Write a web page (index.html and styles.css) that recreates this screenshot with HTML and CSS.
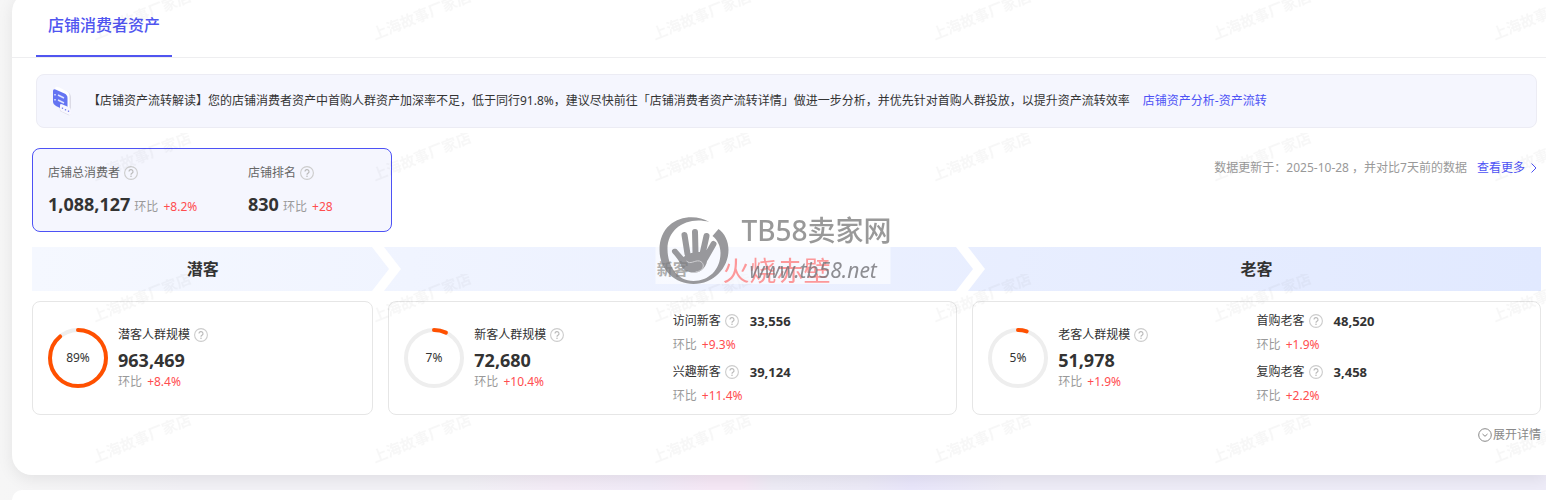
FILE: index.html
```
<!DOCTYPE html>
<html lang="zh-CN">
<head>
    <meta charset="UTF-8">
    <meta name="viewport" content="width=device-width, initial-scale=1.0">
    <title>店铺消费者资产</title>
    <link rel="stylesheet" href="styles.css">
</head>
<body>
    <svg class="defs" width="0" height="0" aria-hidden="true">
        <symbol id="help" viewBox="0 0 14 14">
            <circle cx="7" cy="7" r="6.4" fill="none" stroke="#ccc" stroke-width="1.1"/>
            <path d="M5 5.6a2 2 0 1 1 3 1.7c-.7.4-1 .7-1 1.4" fill="none" stroke="#bbb" stroke-width="1.2"/>
            <circle cx="7" cy="10.3" r=".8" fill="#bbb"/>
        </symbol>
    </svg>

    <main class="panel">
        <svg class="watermark" aria-hidden="true">
            <defs>
                <pattern id="shop-mark" width="280" height="141" patternUnits="userSpaceOnUse">
                    <text x="83" y="48" transform="rotate(-22 83 48)">上海故事厂家店</text>
                </pattern>
            </defs>
            <rect width="100%" height="100%" fill="url(#shop-mark)"/>
        </svg>

        <nav class="tabs">
            <button class="tab">店铺消费者资产</button>
        </nav>

        <div class="notice">
            <svg class="notice-icon" viewBox="0 0 20 32" aria-hidden="true">
                <path d="M5 2 15 6.500q4 2 4 6V28q0 3-3 2L8 26z" fill="#dcdbe6"/>
                <path d="M3 3Q4 1 7 2.200L14.500 6q3 1.500 3 5V27L4 18z" fill="#fff"/>
                <path d="M1 6q0-2.500 2.500-1.500l9 4q3 1.500 3 4.500v13.500L4 21q-3-1.500-3-4z" fill="#6474f2"/>
                <path d="M3 9v1.500M3 14v1.500M6 10l6 3M6 15l6 3" fill="none" stroke="#dfe4ff" stroke-width="1.500"/>
                <path d="M8 20.500q0-2 2-1.200l7 3q2 1 2 3V29q0 1.500-2 .8l-7-3.300q-2-1-2-2.500z" fill="#f8f7ff"/>
                <path d="M10.500 22.500v1.500M13.500 24v1.500M16.500 25.500V27" stroke="#7d86ee" stroke-width="1.300"/>
            </svg>
            <p class="notice-text">【店铺资产流转解读】您的店铺消费者资产中首购人群资产加深率不足，低于同行91.8%，建议尽快前往「店铺消费者资产流转详情」做进一步分析，并优先针对首购人群投放，以提升资产流转效率</p>
            <a class="link" href="#">店铺资产分析-资产流转</a>
        </div>

        <section class="content">
            <div class="overview">
                <div class="summary">
                    <div>
                        <div class="label muted">店铺总消费者<svg class="help"><use href="#help"/></svg></div>
                        <div class="summary-value"><strong class="number">1,088,127</strong><span class="ratio">环比 <em>+8.2%</em></span></div>
                    </div>
                    <div>
                        <div class="label muted">店铺排名<svg class="help"><use href="#help"/></svg></div>
                        <div class="summary-value"><strong class="number">830</strong><span class="ratio">环比 <em>+28</em></span></div>
                    </div>
                </div>
                <div class="update">
                    <span>数据更新于：2025-10-28 ，并对比7天前的数据</span>
                    <a class="link" href="#">查看更多<svg class="arrow" viewBox="0 0 6 12" aria-hidden="true"><path d="M.5 1.500 5 6 .5 10.500"/></svg></a>
                </div>
            </div>

            <div class="stages columns">
                <h2 class="stage">潜客<svg class="chevron" viewBox="0 0 29 44"><path d="M0 0h12l17 22-17 22H0l17-22z"/></svg></h2>
                <h2 class="stage">新客<svg class="chevron" viewBox="0 0 29 44"><path d="M0 0h12l17 22-17 22H0l17-22z"/></svg></h2>
                <h2 class="stage">老客</h2>
            </div>

            <div class="columns">
                <article class="card">
                    <div class="main-metric">
                        <svg class="ring" viewBox="0 0 60 60">
                            <circle class="ring-track" cx="30" cy="30" r="28"/>
                            <circle class="ring-value" cx="30" cy="30" r="28" pathLength="100" stroke-dasharray="89 100" transform="rotate(-90 30 30)"/>
                            <text x="30" y="34">89%</text>
                        </svg>
                        <div class="metric-text">
                            <div class="label">潜客人群规模<svg class="help"><use href="#help"/></svg></div>
                            <strong class="number">963,469</strong>
                            <span class="ratio">环比 <em>+8.4%</em></span>
                        </div>
                    </div>
                </article>

                <article class="card split">
                    <div class="main-metric">
                        <svg class="ring" viewBox="0 0 60 60">
                            <circle class="ring-track" cx="30" cy="30" r="28"/>
                            <circle class="ring-value" cx="30" cy="30" r="28" pathLength="100" stroke-dasharray="7 100" transform="rotate(-90 30 30)"/>
                            <text x="30" y="34">7%</text>
                        </svg>
                        <div class="metric-text">
                            <div class="label">新客人群规模<svg class="help"><use href="#help"/></svg></div>
                            <strong class="number">72,680</strong>
                            <span class="ratio">环比 <em>+10.4%</em></span>
                        </div>
                    </div>
                    <div class="sub-metrics">
                        <div class="sub-metric">
                            <div class="label">访问新客<svg class="help"><use href="#help"/></svg><strong>33,556</strong></div>
                            <div class="ratio">环比 <em>+9.3%</em></div>
                        </div>
                        <div class="sub-metric">
                            <div class="label">兴趣新客<svg class="help"><use href="#help"/></svg><strong>39,124</strong></div>
                            <div class="ratio">环比 <em>+11.4%</em></div>
                        </div>
                    </div>
                </article>

                <article class="card split">
                    <div class="main-metric">
                        <svg class="ring" viewBox="0 0 60 60">
                            <circle class="ring-track" cx="30" cy="30" r="28"/>
                            <circle class="ring-value" cx="30" cy="30" r="28" pathLength="100" stroke-dasharray="5 100" transform="rotate(-90 30 30)"/>
                            <text x="30" y="34">5%</text>
                        </svg>
                        <div class="metric-text">
                            <div class="label">老客人群规模<svg class="help"><use href="#help"/></svg></div>
                            <strong class="number">51,978</strong>
                            <span class="ratio">环比 <em>+1.9%</em></span>
                        </div>
                    </div>
                    <div class="sub-metrics">
                        <div class="sub-metric">
                            <div class="label">首购老客<svg class="help"><use href="#help"/></svg><strong>48,520</strong></div>
                            <div class="ratio">环比 <em>+1.9%</em></div>
                        </div>
                        <div class="sub-metric">
                            <div class="label">复购老客<svg class="help"><use href="#help"/></svg><strong>3,458</strong></div>
                            <div class="ratio">环比 <em>+2.2%</em></div>
                        </div>
                    </div>
                </article>
            </div>

            <div class="footer">
                <button class="expand">
                    <svg viewBox="0 0 14 14" aria-hidden="true"><circle cx="7" cy="7" r="6.300"/><path d="M4.500 6 7 8.300 9.500 6"/></svg>展开详情
                </button>
            </div>
        </section>
    </main>

    <section class="panel next-panel"></section>

    <!-- site stamp over the page -->
    <div class="stamp">
        <svg class="stamp-logo" viewBox="0 0 74 70" aria-hidden="true">
            <path d="M54 6C36-5 4 2 4 34c0 20 16 34 34 34 20 0 35-16 35-34 0-9-4-17-10-21l-6 7c5 4 8 10 8 17 0 17-12 28-27 28C22 65 12 50 12 33 12 12 32 0 54 6z"/>
            <path d="M28 41c6-5 15-6 24-4 1 6-1 16-9 19-8 2-16-1-18-8-2-4-5-8-8-11-2-3 1-5 4-4z"/>
            <path class="fingers" d="M32 38 29 19M40 37 39.500 16M47 38 51 20M50 42 58 28"/>
            <path class="palm-line" d="M31 45c4 4 8-1 13 0 6 2 5 10-4 11"/>
        </svg>
        <div class="stamp-text">
            <span class="stamp-name">TB58卖家网</span>
            <span class="stamp-url">www.tb58.net</span>
        </div>
        <span class="stamp-user">火烧赤壁</span>
    </div>
</body>
</html>
```
FILE: styles.css
```
* {
    margin: 0;
    padding: 0;
    box-sizing: border-box;
}

body {
    min-height: 100vh;
    display: flex;
    flex-direction: column;
    gap: 15px;
    padding-left: 12px;
    overflow: hidden;
    background: linear-gradient(90deg, #f6f6f6 0, #f2f1f6 12%, #f2f1f6 30%, #f4ecf7 36%, #f1ebf8 42%, #f6e8f6 46%, #f6e8f6 48%, #eeecf6 50%, #eceaf7 56%, #e9e6fb 59%, #eeecf7 65%, #eeecf8 100%);
    color: #333;
    font-family: 'Noto Sans', 'Noto Sans CJK SC', sans-serif;
    font-size: 12px;
    line-height: 20px;
}

button {
    border: none;
    background: none;
    font-family: inherit;
    cursor: pointer;
}

em {
    font-style: normal;
}

.defs {
    position: absolute;
}

.panel {
    position: relative;
    margin-top: -8px;
    background: #fff;
    border-radius: 20px 0 0 20px;
    box-shadow: 0 4px 16px rgba(0, 0, 0, 0.08);
}

.next-panel {
    flex: 1;
    margin-top: 0;
    min-height: 10px;
    border-radius: 20px 0 0 0;
    box-shadow: none;
}

/* repeated shop name */
.watermark {
    position: absolute;
    top: 0;
    left: 0;
    width: 100%;
    height: 100%;
    z-index: 1;
    pointer-events: none;
}

.watermark text {
    font-size: 15px;
    font-weight: bold;
    fill: rgba(0, 0, 0, 0.03);
}

.tabs {
    display: flex;
    padding-left: 24px;
    border-bottom: 1px solid #eeeef0;
}

.tab {
    padding: 21px 12px 18px;
    border-bottom: 2px solid #5055f0;
    color: #5055f0;
    font-size: 16px;
    font-weight: 500;
    line-height: 24px;
}

.notice {
    position: relative;
    z-index: 2;
    display: flex;
    align-items: center;
    min-height: 54px;
    margin: 16px 9px 20px 24px;
    padding: 8px 15px;
    background: #f5f6fe;
    border: 1px solid #ececf4;
    border-radius: 8px;
}

.notice-icon {
    width: 20px;
    height: 32px;
    margin-right: 16px;
    flex-shrink: 0;
}

.notice-text {
    margin-right: 13px;
}

.link {
    color: #4d52f5;
    text-decoration: none;
    white-space: nowrap;
}

.content {
    padding: 0 5px 30px 20px;
}

.overview {
    display: flex;
    justify-content: space-between;
    align-items: flex-start;
    margin-bottom: 15px;
}

.summary {
    display: grid;
    grid-template-columns: 200px 128px;
    padding: 14px 15px;
    background: #f5f6fe;
    border: 1px solid #4d52f5;
    border-radius: 8px;
}

.label {
    display: flex;
    align-items: center;
}

.muted {
    color: #666;
}

.help {
    width: 14px;
    height: 14px;
    margin-left: 4px;
}

.summary-value {
    display: flex;
    align-items: baseline;
    gap: 4px;
    margin-top: 8px;
}

.number {
    font-size: 18px;
    line-height: 26px;
}

.ratio {
    color: #999;
}

.ratio em {
    margin-left: 2px;
    color: #ff4d4f;
}

.update {
    display: flex;
    gap: 10px;
    padding: 10px 4px 0 0;
    color: #999;
}

.arrow {
    width: 6px;
    height: 12px;
    margin-left: 6px;
    vertical-align: -2px;
    fill: none;
    stroke: #4d52f5;
}

.columns {
    display: grid;
    grid-template-columns: 3fr 5fr 5fr;
    gap: 15px;
}

.stages {
    margin-bottom: 10px;
    background: linear-gradient(90deg, #f5f8ff, #ebf0ff 50%, #e1e9ff);
}

.stage {
    position: relative;
    font-size: 16px;
    line-height: 44px;
    text-align: center;
}

.chevron {
    position: absolute;
    top: 0;
    left: 100%;
    width: 29px;
    height: 44px;
    margin-left: -1px;
    fill: #fff;
}

.card {
    display: grid;
    align-items: center;
    min-height: 114px;
    padding: 6px 15px;
    border: 1px solid #e6e6e6;
    border-radius: 8px;
}

.split {
    grid-template-columns: 1fr 1fr;
}

.main-metric {
    display: flex;
    align-items: center;
    gap: 10px;
}

.ring {
    width: 60px;
    height: 60px;
    flex-shrink: 0;
}

.ring circle {
    fill: none;
    stroke-width: 4;
}

.ring .ring-track {
    stroke: #eee;
}

.ring .ring-value {
    stroke: #ff5000;
    stroke-linecap: round;
}

.ring text {
    fill: #333;
    text-anchor: middle;
}

.metric-text {
    display: flex;
    flex-direction: column;
    padding-bottom: 2px;
}

.metric-text .label {
    line-height: 24px;
}

.metric-text .ratio {
    line-height: 18px;
}

.sub-metrics {
    display: grid;
    gap: 3px;
    line-height: 24px;
}

.sub-metric strong {
    margin-left: 11px;
    font-size: 13px;
}

.footer {
    display: flex;
    justify-content: flex-end;
    margin-top: 10px;
}

.expand {
    display: flex;
    align-items: center;
    gap: 1px;
    color: #888;
    font-size: 12px;
    line-height: 20px;
}

.expand svg {
    width: 14px;
    height: 14px;
    fill: none;
    stroke: #888;
}

.stamp {
    position: fixed;
    top: 50%;
    left: 50%;
    z-index: 3;
    display: flex;
    width: 235px;
    height: 68px;
    transform: translate(-50%, -50%);
    background: rgba(255, 255, 255, 0.6);
    pointer-events: none;
}

.stamp-logo {
    width: 74px;
    height: 70px;
    margin-right: 12px;
    flex-shrink: 0;
    fill: #808083;
    opacity: 0.8;
}

.stamp-logo .fingers {
    fill: none;
    stroke: #808083;
    stroke-width: 6;
    stroke-linecap: round;
}

.stamp-logo .palm-line {
    fill: none;
    stroke: #c4c4c8;
}

.stamp-text {
    position: relative;
    z-index: 1;
    display: flex;
    flex-direction: column;
    color: #999;
    white-space: nowrap;
}

.stamp-name {
    font-size: 28px;
    font-weight: 500;
    line-height: 28px;
}

.stamp-url {
    padding: 12px 0 0 8px;
    color: rgba(115, 115, 120, 0.8);
    font-size: 21px;
    font-style: italic;
    line-height: 28px;
}

.stamp-user {
    position: absolute;
    left: 67px;
    bottom: -1px;
    color: rgba(255, 100, 100, 0.65);
    font-size: 27px;
    line-height: 28px;
}
```
